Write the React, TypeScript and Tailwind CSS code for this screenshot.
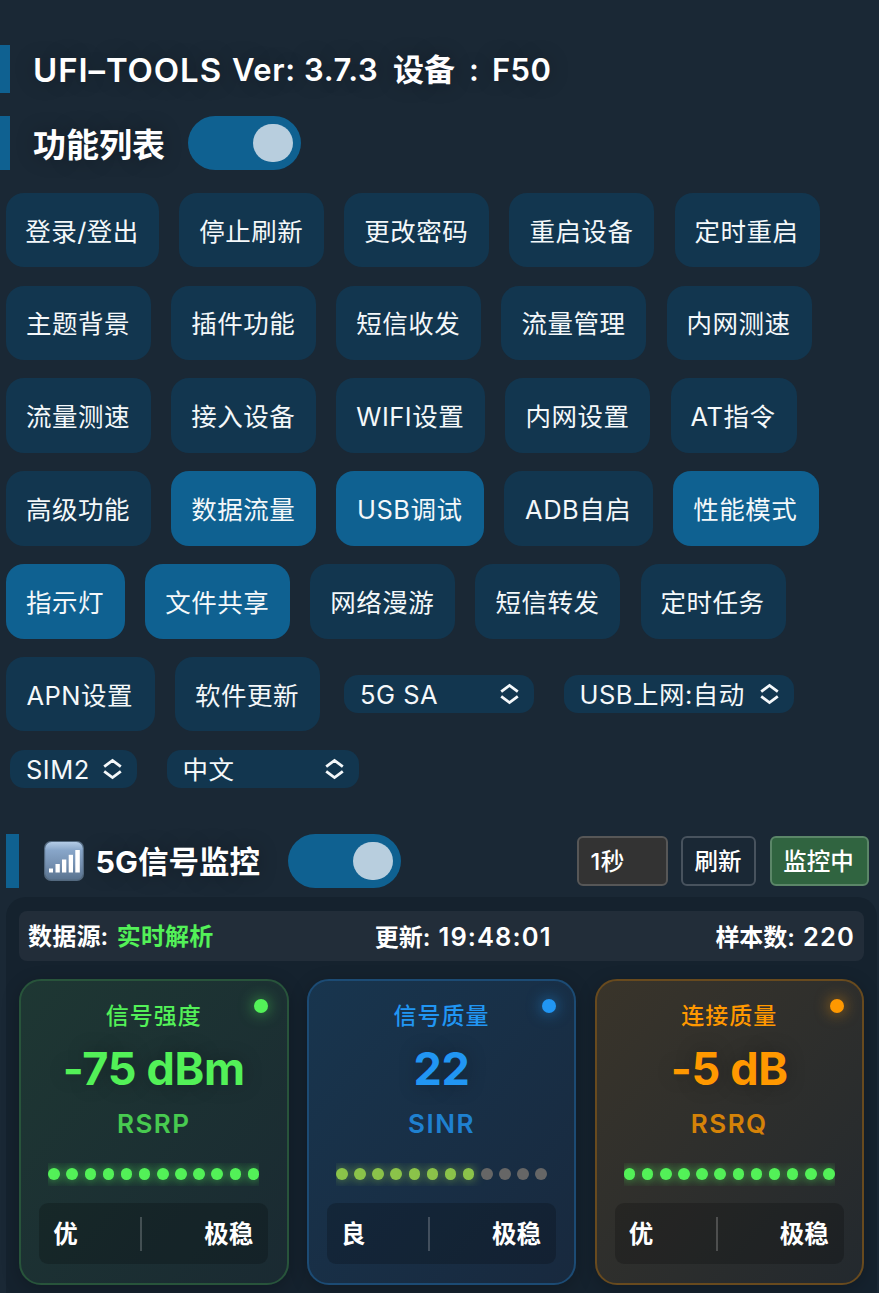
import { useState } from "react";
import clsx from "clsx";

type Fn = {
  label: string;
  width: string;
  on?: boolean;
};

type Metric = {
  title: string;
  value: string;
  unit: string;
  filled: number;
  level: string;
  stable: string;
  card: string;
  text: string;
  dot: string;
  bar: string;
};

const rows: Fn[][] = [
  [
    { label: "登录/登出", width: "w-[153px]" },
    { label: "停止刷新", width: "w-[145px]" },
    { label: "更改密码", width: "w-[145px]" },
    { label: "重启设备", width: "w-[145px]" },
    { label: "定时重启", width: "w-[145px]" },
  ],
  [
    { label: "主题背景", width: "w-[145px]" },
    { label: "插件功能", width: "w-[145px]" },
    { label: "短信收发", width: "w-[145px]" },
    { label: "流量管理", width: "w-[145px]" },
    { label: "内网测速", width: "w-[145px]" },
  ],
  [
    { label: "流量测速", width: "w-[145px]" },
    { label: "接入设备", width: "w-[145px]" },
    { label: "WIFI设置", width: "w-[149px]" },
    { label: "内网设置", width: "w-[145px]" },
    { label: "AT指令", width: "w-[126px]" },
  ],
  [
    { label: "高级功能", width: "w-[145px]" },
    { label: "数据流量", width: "w-[145px]", on: true },
    { label: "USB调试", width: "w-[148px]", on: true },
    { label: "ADB自启", width: "w-[148.5px]" },
    { label: "性能模式", width: "w-[145.5px]", on: true },
  ],
  [
    { label: "指示灯", width: "w-[119px]", on: true },
    { label: "文件共享", width: "w-[145px]", on: true },
    { label: "网络漫游", width: "w-[145px]" },
    { label: "短信转发", width: "w-[145px]" },
    { label: "定时任务", width: "w-[145px]" },
  ],
];

const metrics: Metric[] = [
  {
    title: "信号强度",
    value: "-75 dBm",
    unit: "RSRP",
    filled: 12,
    level: "优",
    stable: "极稳",
    card: "border-[#28543b] from-[#1e3733] to-[#1a2a32]",
    text: "text-[#53f158]",
    dot: "bg-[#53f158] shadow-[0_0_15px_rgba(83,241,88,0.65)]",
    bar: "bg-[#53f158] shadow-[0_0_11px_rgba(83,241,88,0.75)]",
  },
  {
    title: "信号质量",
    value: "22",
    unit: "SINR",
    filled: 8,
    level: "良",
    stable: "极稳",
    card: "border-[#1c4b74] from-[#18354e] to-[#18293e]",
    text: "text-[#2196f3]",
    dot: "bg-[#2196f3] shadow-[0_0_15px_rgba(33,150,243,0.65)]",
    bar: "bg-[#8bc34a] shadow-[0_0_11px_rgba(139,195,74,0.75)]",
  },
  {
    title: "连接质量",
    value: "-5 dB",
    unit: "RSRQ",
    filled: 12,
    level: "优",
    stable: "极稳",
    card: "border-[#684a1e] from-[#39342a] to-[#23292e]",
    text: "text-[#ff9800]",
    dot: "bg-[#ff9800] shadow-[0_0_15px_rgba(255,152,0,0.65)]",
    bar: "bg-[#53f158] shadow-[0_0_11px_rgba(83,241,88,0.75)]",
  },
];

function Toggle() {
  const [on, setOn] = useState(true);

  return (
    <button
      type="button"
      onClick={() => setOn(!on)}
      className={clsx(
        "flex h-[54px] w-[113px] flex-shrink-0 items-center rounded-full px-2",
        on ? "justify-end bg-[#0f6191]" : "justify-start bg-[#12364f]"
      )}
    >
      <span className="h-[38px] w-10 rounded-full bg-[#b8cede]" />
    </button>
  );
}

function FnButton({ label, width, on }: Fn) {
  const [active, setActive] = useState(!!on);

  return (
    <button
      type="button"
      onClick={() => setActive(!active)}
      className={clsx(
        "h-[74.5px] flex-shrink-0 whitespace-nowrap rounded-[18px] pr-px pt-[3px] text-center",
        width,
        active ? "bg-[#0f6191]" : "bg-[#12364f]"
      )}
    >
      {label}
    </button>
  );
}

function Select({ label, width }: { label: string; width: string }) {
  return (
    <button
      type="button"
      className={clsx(
        "flex h-[38.5px] flex-shrink-0 items-center justify-between whitespace-nowrap rounded-[14px] bg-[#12364f] pl-4 pr-[15px]",
        width
      )}
    >
      <span className="leading-[36px] pt-[2px]">{label}</span>
      <svg
        className="h-[22px] w-[19px]"
        fill="none"
        stroke="currentColor"
        strokeWidth={2.8}
        viewBox="0 0 19 22"
      >
        <path d="M1.2 8.6L9.5 2.4L17.8 8.6M1.2 13.4L9.5 19.6L17.8 13.4" />
      </svg>
    </button>
  );
}

function SignalIcon() {
  return (
    <svg className="h-10 w-10" viewBox="0 0 40 40">
      <defs>
        <linearGradient id="sig" x1="0" y1="0" x2="0" y2="1">
          <stop offset="0" stopColor="#b4cce6" />
          <stop offset="0.22" stopColor="#88a6c9" />
          <stop offset="0.6" stopColor="#7590b1" />
          <stop offset="1" stopColor="#59738f" />
        </linearGradient>
      </defs>
      <rect width="40" height="40" rx="7" fill="#53697f" />
      <rect x="1.2" y="1" width="37.6" height="37.6" rx="6.5" fill="url(#sig)" />
      <g fill="#fff">
        <rect x="5" y="27.5" width="4" height="4" />
        <rect x="11.5" y="23" width="4.3" height="8.5" />
        <rect x="18" y="18.5" width="4.3" height="13" />
        <rect x="24.7" y="13.8" width="4.3" height="17.7" />
        <rect x="31.3" y="9" width="4.5" height="22.5" />
      </g>
    </svg>
  );
}

function MetricCard({ m }: { m: Metric }) {
  return (
    <div
      className={clsx(
        "relative flex h-[306px] w-[269.5px] flex-col items-center rounded-[22px] border-2 bg-gradient-to-br shadow-[0_4px_18px_rgba(0,0,0,0.22)]",
        m.card
      )}
    >
      <span
        className={clsx(
          "absolute right-[18.5px] top-[18px] h-3.5 w-3.5 rounded-full",
          m.dot
        )}
      />
      <div
        className={clsx(
          "mt-[18.5px] h-[34px] text-[23px] font-medium leading-[34px] tracking-[1px]",
          m.text
        )}
      >
        {m.title}
      </div>
      <div
        className={clsx(
          "mt-[11px] h-[50px] whitespace-nowrap text-[45px] font-bold leading-[50px] tracking-[-0.3px] [text-shadow:0_0_20px_rgba(0,0,0,0.3)]",
          m.text
        )}
      >
        {m.value}
      </div>
      <div
        className={clsx(
          "mt-[12.5px] h-[34px] text-[26px] font-semibold leading-[34px] tracking-[1.5px] opacity-80",
          m.text
        )}
      >
        {m.unit}
      </div>
      <div className="mt-[22px] flex h-[23px] w-[211px] items-center justify-between overflow-hidden">
        {Array.from({ length: 12 }, (_, i) => (
          <span
            key={i}
            className={clsx(
              "h-3 w-[11.5px] flex-shrink-0 rounded-full",
              i < m.filled ? m.bar : "bg-[#666666]"
            )}
          />
        ))}
      </div>
      <div className="mt-[17.5px] flex h-[61px] w-[229px] items-center justify-between rounded-[9px] bg-black/20 pl-[14px] pr-[15px] text-[24.5px] font-bold text-white">
        <span className="pt-[2px]">{m.level}</span>
        <span className="h-[34px] w-[2px] bg-white/20" />
        <span className="pt-[2px]">{m.stable}</span>
      </div>
    </div>
  );
}

export default function App() {
  return (
    <div className="flex h-[1293px] w-[879px] flex-col overflow-hidden bg-[#1a2835] pt-[45px] font-['Inter','Noto_Sans_CJK_SC',sans-serif] text-white">
      {/* Title */}
      <div className="flex h-12 items-center whitespace-nowrap border-l-[10px] border-[#0f6191] pl-[23px] pt-[3px] font-semibold [text-shadow:0_0_20px_rgba(0,0,0,0.3)]">
        <span className="w-[199px] text-[33px] tracking-[0.9px]">UFI–TOOLS</span>
        <span className="w-[161px] text-[31px] tracking-[0.6px]">Ver: 3.7.3</span>
        <span className="w-[76px] text-[31px]">设备</span>
        <span className="w-[23px] text-[31px]">:</span>
        <span className="text-[31px] tracking-[0.4px]">F50</span>
      </div>

      {/* Function list header */}
      <div className="mt-[22.5px] flex h-[54.5px] items-center border-l-[10px] border-[#0f6191] pl-[23px]">
        <h2 className="w-[155px] pt-[4px] text-[33px] font-bold leading-[50px] [text-shadow:0_0_20px_rgba(0,0,0,0.3)]">
          功能列表
        </h2>
        <Toggle />
      </div>

      {/* Function buttons */}
      <div className="mt-[23.4px] flex flex-col gap-[18.3px] pl-1.5 text-[25.5px] leading-[36px] tracking-[0.5px] text-[#f4f8fa]">
        {rows.map((row, i) => (
          <div key={i} className="flex gap-[20.15px]">
            {row.map((fn) => (
              <FnButton key={fn.label} {...fn} />
            ))}
          </div>
        ))}
        <div className="flex items-center">
          <FnButton label="APN设置" width="w-[148.5px]" />
          <div className="w-[20.5px]" />
          <FnButton label="软件更新" width="w-[145px]" />
          <div className="ml-6 flex gap-[29.5px]">
            <Select label="5G SA" width="w-[190px]" />
            <Select label="USB上网:自动" width="w-[230.5px]" />
          </div>
        </div>
        <div className="flex gap-[29.5px] pl-1">
          <Select label="SIM2" width="w-[127px]" />
          <Select label="中文" width="w-[192.5px]" />
        </div>
      </div>

      {/* Signal monitor header */}
      <div className="ml-1.5 mt-[45.6px] flex h-[54px] flex-shrink-0 items-center border-l-[13px] border-[#0f6191] pl-[25px]">
        <SignalIcon />
        <h2 className="ml-[11.5px] w-[192.5px] whitespace-nowrap pt-[2px] text-[30.5px] font-bold leading-[50px] [text-shadow:0_0_20px_rgba(0,0,0,0.3)]">
          5G信号监控
        </h2>
        <Toggle />
        <div className="ml-auto mr-[10.5px] flex h-[50px] gap-[13.5px] text-[23.5px] font-medium leading-[32px]">
          <button className="w-[91px] rounded-[6px] border-2 border-[#575757] bg-[#333333] pl-[12px] pt-[2px] text-left tracking-[0.6px]">
            1秒
          </button>
          <button className="w-[75px] rounded-[6px] border-2 border-[#48535e] pr-px pt-[2px]">
            刷新
          </button>
          <button className="w-[99px] rounded-[6px] border-2 border-[#5b8668] bg-[#306440] pr-px pt-[2px]">
            监控中
          </button>
        </div>
      </div>

      {/* Signal panel */}
      <div className="ml-1.5 mr-[2px] mt-[9px] h-[420px] flex-shrink-0 rounded-[20px] bg-[#15222e] px-[13px] pt-[14px]">
        <div className="flex h-[50px] items-center justify-between whitespace-nowrap rounded-[8px] bg-[#222d39] pl-[9px] pr-[9px] pt-[2px] text-[24px] font-semibold">
          <div className="w-[183px] tracking-[0.2px]">
            数据源: <span className="ml-[2px] text-[#53f158]">实时解析</span>
          </div>
          <div>
            更新:{" "}
            <span className="ml-[2px] text-[25.5px] tracking-[1.1px]">
              19:48:01
            </span>
          </div>
          <div>
            样本数:{" "}
            <span className="ml-[2px] text-[25.5px] tracking-[1.1px]">220</span>
          </div>
        </div>
        <div className="mt-[18px] flex justify-between">
          {metrics.map((m) => (
            <MetricCard key={m.unit} m={m} />
          ))}
        </div>
      </div>
    </div>
  );
}
